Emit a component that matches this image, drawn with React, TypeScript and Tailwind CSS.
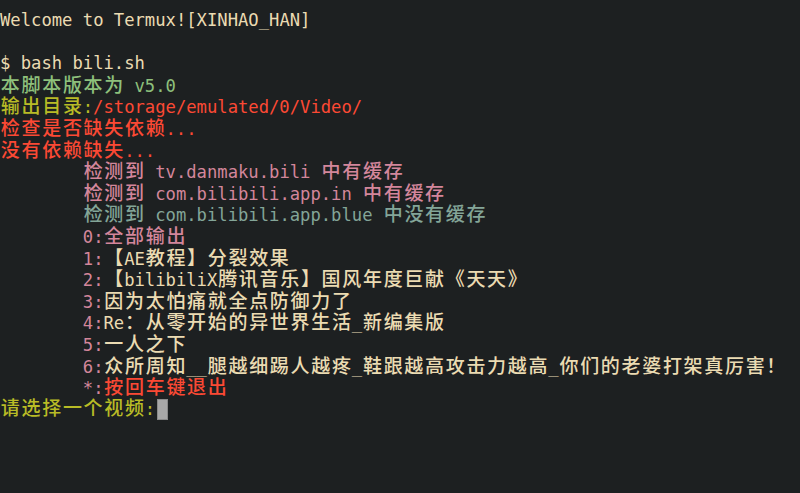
import React from "react";

type Seg = { t: string; c: string };

const FG = "text-[#ebdbb2]";
const GREEN = "text-[#8ec07c]";
const YELLOW = "text-[#b8bb26]";
const RED = "text-[#fb4934]";
const PINK = "text-[#d3869b]";
const BLUE = "text-[#83a598]";

const TAB = "        ";

const lines: Seg[][] = [
  [{ t: "Welcome to Termux![XINHAO_HAN]", c: FG }],
  [],
  [{ t: "$ bash bili.sh", c: FG }],
  [{ t: "本脚本版本为 v5.0", c: GREEN }],
  [
    { t: "输出目录:", c: YELLOW },
    { t: "/storage/emulated/0/Video/", c: RED },
  ],
  [{ t: "检查是否缺失依赖...", c: RED }],
  [{ t: "没有依赖缺失...", c: RED }],
  [{ t: TAB + "检测到 tv.danmaku.bili 中有缓存", c: PINK }],
  [{ t: TAB + "检测到 com.bilibili.app.in 中有缓存", c: PINK }],
  [{ t: TAB + "检测到 com.bilibili.app.blue 中没有缓存", c: BLUE }],
  [{ t: TAB + "0:全部输出", c: PINK }],
  [
    { t: TAB + "1:", c: PINK },
    { t: "【AE教程】分裂效果", c: FG },
  ],
  [
    { t: TAB + "2:", c: PINK },
    { t: "【bilibiliX腾讯音乐】国风年度巨献《天天》", c: FG },
  ],
  [
    { t: TAB + "3:", c: PINK },
    { t: "因为太怕痛就全点防御力了", c: FG },
  ],
  [
    { t: TAB + "4:", c: PINK },
    { t: "Re：从零开始的异世界生活_新编集版", c: FG },
  ],
  [
    { t: TAB + "5:", c: PINK },
    { t: "一人之下", c: FG },
  ],
  [
    { t: TAB + "6:", c: PINK },
    { t: "众所周知__腿越细踢人越疼_鞋跟越高攻击力越高_你们的老婆打架真厉害！", c: FG },
  ],
  [
    { t: TAB + "*:", c: PINK },
    { t: "按回车键退出", c: RED },
  ],
];

// terminal cells: CJK / fullwidth chars take two columns
const isWide = (ch: string) => {
  const n = ch.codePointAt(0) ?? 0;
  return (
    (n >= 0x2e80 && n <= 0xa4cf) ||
    (n >= 0xac00 && n <= 0xd7a3) ||
    (n >= 0xf900 && n <= 0xfaff) ||
    (n >= 0xfe30 && n <= 0xfe4f) ||
    (n >= 0xff00 && n <= 0xff60) ||
    (n >= 0xffe0 && n <= 0xffe6)
  );
};

const Cells = ({ seg }: { seg: Seg }) => {
  const parts: React.ReactNode[] = [];
  let run = "";
  const chars = Array.from(seg.t);
  chars.forEach((ch, i) => {
    if (isWide(ch)) {
      if (run) {
        parts.push(<span key={"n" + i}>{run}</span>);
        run = "";
      }
      parts.push(
        <span
          key={"w" + i}
          className="inline-block w-[20.7px] text-center text-[19px] font-medium"
        >
          {ch}
        </span>
      );
    } else {
      run += ch;
    }
  });
  if (run) parts.push(<span key="end">{run}</span>);
  return <span className={seg.c}>{parts}</span>;
};

export default function App() {
  return (
    <div className="w-[800px] h-[493px] overflow-hidden bg-[#1d2021] pt-[10px] font-['DejaVu_Sans_Mono','Noto_Sans_CJK_SC',monospace] text-[17.2px] leading-[21.6px]">
      {lines.map((segs, i) => (
        <div key={i} className="h-[21.6px] whitespace-pre">
          {segs.map((s, j) => (
            <Cells key={j} seg={s} />
          ))}
        </div>
      ))}
      <div className="h-[21.6px] whitespace-pre flex items-center">
        <Cells seg={{ t: "请选择一个视频:", c: YELLOW }} />
        <span className="inline-block w-[10.35px] h-[21px] bg-[#a8a8a8] border border-[#8a8a8a] ml-[2px]" />
      </div>
    </div>
  );
}
